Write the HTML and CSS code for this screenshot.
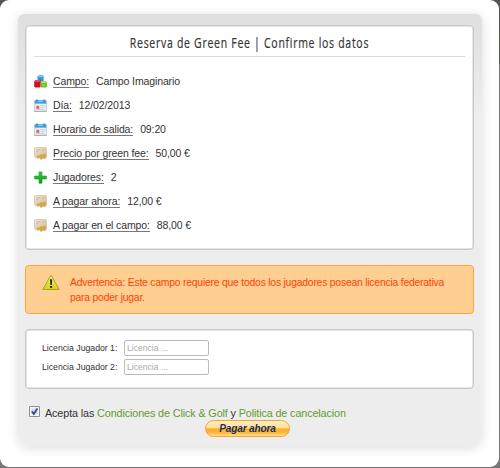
FILE: index.html
```html
<!DOCTYPE html>
<html lang="es">
<head>
<meta charset="utf-8">
<title>Reserva de Green Fee</title>
<link rel="stylesheet" href="styles.css">
</head>
<body>
<svg class="defs" width="0" height="0" aria-hidden="true">
  <defs>
    <linearGradient id="parchment" x2="1" y2="1"><stop stop-color="#f3e8d6"/><stop offset="1" stop-color="#cfb992"/></linearGradient>
    <linearGradient id="plus" x2="0" y2="1"><stop stop-color="#43cf43"/><stop offset="1" stop-color="#069b16"/></linearGradient>
    <linearGradient id="alert" x2="0" y2="1"><stop stop-color="#f4f3a0"/><stop offset=".55" stop-color="#e8df3c"/><stop offset="1" stop-color="#d8cd24"/></linearGradient>
    <symbol id="cubes" viewBox="0 0 13 13">
      <path d="M3.5 1.2 5 .3h3.6l1 .9v5.2H3.5z" fill="#2699d8"/><path d="M3.7 1.3 5 .4h3.5l.9.9-1 .9H4.6z" fill="#7accf4"/>
      <path d="M.2 6.2 1.6 5.1h4.3l.9 1v5.6l-1.2.8H1.3l-1.1-1z" fill="#d40f22"/><path d="M.4 6.2 1.7 5.2h4.1l.8.8-1 .8H1.6z" fill="#ef6270"/>
      <path d="M6.4 7.2 7.5 6.3h4.2l1.2.9v4.3l-1 1H7.4l-1-1z" fill="#6fbb25"/><path d="M6.9 7.3 7.8 6.4h3.8l.8.7-.9.8H7.9z" fill="#b9e66c"/><path d="M7.8 9h3.2v2.2H7.8z" fill="#93d34a"/>
    </symbol>
    <symbol id="calendar" viewBox="0 0 13 13">
      <path d="M.8 1.5h11.4l.5 11H.3z" fill="#edf1f4" stroke="#a4adb5" stroke-width=".6"/>
      <path d="M.7 1.4h11.6v3.3H.7z" fill="#37a5e3"/><path d="M3 .2v2.4M10 .2v2.4" stroke="#587b93" stroke-width="1"/><path d="M4.2 2.6h4.6" stroke="#80cdf5"/>
      <path d="M6.5 6.5h4.4M6.5 8.5h4.4M2 10.5h8.5M2 6.5h3" stroke="#bfcbd4" stroke-width=".9"/><path d="M2.3 7.2h3v2.5h-3z" fill="#ed5146"/><path d="M.4 12.3h12.2" stroke="#8a949c" stroke-width=".6"/>
    </symbol>
    <symbol id="money" viewBox="0 0 13 13">
      <path d="M1 .4h11l.7 1v8l-1 1H1.4L.3 9.2V1.4z" fill="url(#parchment)" stroke="#c3b196" stroke-width=".6"/>
      <path d="M2.3 2.7h4M8 2.7h2.5M2.4 4.7h2" stroke="#bcaa8c" stroke-width=".7"/>
      <path d="M3.3 8h2.4v3.5H3.3zM6.2 7h2.4v5.5H6.2zM9.2 6.3h2.5v5.5H9.2z" fill="#cc9e42"/><path d="M3.3 8h2.4M6.2 7h2.4M9.2 6.4h2.5" stroke="#efd38b"/><path d="M3.3 10.3h2.4M6.2 9.5h2.4M9.2 9h2.5" stroke="#e3be6b" stroke-width=".6"/>
    </symbol>
    <symbol id="add" viewBox="0 0 13 13"><path d="M5 .9h3v4.1h4.4v3H8v4.2H5V8H.6V5H5z" fill="url(#plus)" stroke="#169d26" stroke-width=".6"/></symbol>
  </defs>
</svg>
<main class="dialog">
  <section class="panel">
    <div class="card summary">
      <h1><span>Reserva de Green Fee | Confirme los datos</span></h1>
      <dl class="details">
        <div><svg><use href="#cubes"/></svg><dt>Campo:</dt><dd>Campo Imaginario</dd></div>
        <div><svg><use href="#calendar"/></svg><dt>Día:</dt><dd>12/02/2013</dd></div>
        <div><svg><use href="#calendar"/></svg><dt>Horario de salida:</dt><dd>09:20</dd></div>
        <div><svg><use href="#money"/></svg><dt>Precio por green fee:</dt><dd>50,00 €</dd></div>
        <div><svg><use href="#add"/></svg><dt>Jugadores:</dt><dd>2</dd></div>
        <div><svg><use href="#money"/></svg><dt>A pagar ahora:</dt><dd>12,00 €</dd></div>
        <div><svg><use href="#money"/></svg><dt>A pagar en el campo:</dt><dd>88,00 €</dd></div>
      </dl>
    </div>
    <div class="warning">
      <svg viewBox="0 0 18 17"><path d="M9 1 17.2 15.5H.8z" fill="url(#alert)" stroke="#aaa51f" stroke-width="1" stroke-linejoin="round"/><path d="M8 5.3h2.2L9.8 11H8.4z" fill="#252b22"/><path d="M8.1 12h2v1.9h-2z" fill="#252b22"/></svg>
      <p>Advertencia: Este campo requiere que todos los jugadores posean licencia federativa<br>para poder jugar.</p>
    </div>
    <div class="card licences">
      <label><span>Licencia Jugador 1:</span><input type="text" placeholder="Licencia ..."></label>
      <label><span>Licencia Jugador 2:</span><input type="text" placeholder="Licencia ..."></label>
    </div>
    <div class="terms">
      <svg class="check" viewBox="0 0 11 11"><path d="M.5.5h10v10H.5z" fill="#f5f6f7" stroke="#8d9195"/><path d="M2.5 2.5h6v6h-6z" fill="#d9dee5"/><path d="m2.8 5.3 2 2.7L8.4 2.4" fill="none" stroke="#34468e" stroke-width="1.8"/></svg>
      <span>Acepta las <a>Condiciones de Click &amp; Golf</a> y <a>Politica de cancelacion</a></span>
    </div>
    <button type="button">Pagar ahora</button>
  </section>
</main>
</body>
</html>
```
FILE: styles.css
```css
* { box-sizing: border-box; }
body {
  margin: 0;
  width: 500px;
  height: 468px;
  overflow: hidden;
  background: linear-gradient(#555 0 32px, #53633f 32px 64px, #777 64px);
  font-family: "Liberation Sans", Arial, sans-serif;
  color: #333;
}
.defs { position: absolute; }
.dialog {
  width: 499px;
  height: 467px;
  padding: 14px 17px 0 18px;
  background: #fff;
  border-radius: 9px;
}
.panel {
  height: 432px;
  padding: 11px 8px 0 7px;
  border-radius: 6px 6px 13px 13px;
  background: linear-gradient(#dfdfdf, #e1e1e1 20px, #ededed 95px);
  box-shadow: 0 2px 12px rgba(0, 0, 0, .14);
}
.card {
  border: 1px solid #c8c8c8;
  border-radius: 4px;
  background: #fff;
  box-shadow: inset 0 0 0 .5px #ccc;
}
.summary { height: 225px; padding: 0 8px; }
h1 {
  display: flex;
  justify-content: center;
  height: 31px;
  margin: 0;
  border-bottom: 1px solid #ddd;
  font: 400 14.5px/34px "Open Sans", sans-serif;
  letter-spacing: 1px;
  white-space: nowrap;
  -webkit-text-stroke: .2px #333;
}
h1 span { transform: scaleX(.723); }
.details { margin: 12px 0 0; font-size: 10.5px; letter-spacing: -.12px; }
.details div { display: flex; align-items: center; height: 24px; }
.details svg { width: 13px; height: 13px; margin-right: 6px; }
dt { height: 13px; line-height: 12px; border-bottom: 1px solid #777; }
dd { height: 13px; margin: 0 0 0 7px; line-height: 12px; }
.warning {
  display: flex;
  height: 49px;
  margin-top: 15px;
  padding: 8px 16px;
  border: 1px solid #fca53a;
  border-radius: 4px;
  background: #ffce91;
  color: #ff4307;
  font-size: 10.4px;
  letter-spacing: -.225px;
  line-height: 15px;
  white-space: nowrap;
}
.warning svg { width: 18px; height: 17px; margin-right: 10px; }
.warning p { margin: 1px 0 0; }
.licences {
  display: grid;
  align-content: start;
  gap: 3px;
  height: 60px;
  margin-top: 15px;
  padding: 10px 16px;
}
.licences label { display: flex; align-items: center; height: 16px; font-size: 8.7px; }
.licences span { width: 82px; white-space: nowrap; }
input {
  width: 85px;
  height: 16px;
  padding: 0 2px;
  border: 1px solid #bbb;
  border-radius: 2px;
  font: 8.6px "Liberation Sans", sans-serif;
}
input::placeholder { color: #aaa; opacity: 1; }
.terms { display: flex; height: 14px; margin: 17px 0 0 4px; font-size: 10.8px; line-height: 14px; letter-spacing: -.12px; white-space: nowrap; }
.check { width: 11px; height: 11px; margin-right: 5px; }
.terms a { color: #629c2e; }
button {
  display: block;
  width: 85px;
  height: 17px;
  margin: 0 0 0 180px;
  padding: 0;
  border: 1px solid #f9a141;
  border-radius: 9px;
  background: linear-gradient(#ffefbf, #ffe09a 45%, #ffae28 52%, #ffb335 75%, #ffe08a);
  color: #17305a;
  font: italic 700 10.1px/15px "Liberation Sans", sans-serif;
  letter-spacing: -.15px;
}
```
